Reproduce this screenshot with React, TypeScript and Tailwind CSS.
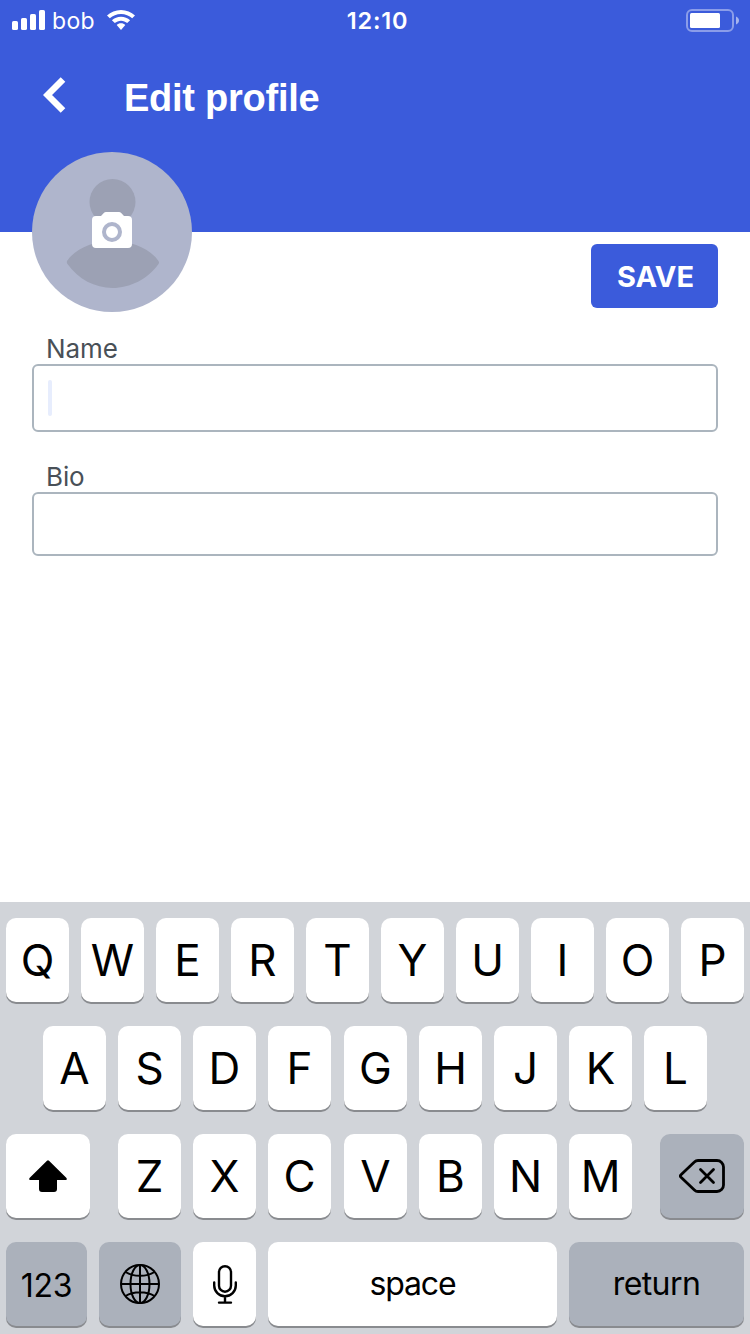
import type { ReactNode } from "react";

function StatusBar() {
  return (
    <div className="grid h-10 grid-cols-3 items-center text-white">
      <div className="flex items-center pl-3">
        <svg className="h-5 w-[34px]" viewBox="0 0 34 20" fill="currentColor">
          <rect x="0" y="11" width="6" height="9" rx="1.6" />
          <rect x="9" y="8" width="6" height="12" rx="1.6" />
          <rect x="18" y="4" width="6" height="16" rx="1.6" />
          <rect x="27" y="0" width="6" height="20" rx="1.6" />
        </svg>
        <span className="ml-[6px] w-[44px] pt-[2px] text-[23px] leading-[38px] font-normal tracking-[0.3px]">bob</span>
        <svg className="ml-[11px] h-5 w-7" viewBox="0 0 28 20" fill="currentColor">
          <path d="M14 0C8.600 0 3.700 2.100 0 5.500l2.800 2.800C5.800 5.600 9.700 4 14 4s8.200 1.600 11.200 4.300L28 5.500C24.300 2.100 19.400 0 14 0Z" />
          <path d="M14 6.700c-3.500 0-6.700 1.300-9.100 3.600l2.900 2.800C9.500 11.600 11.600 10.700 14 10.700s4.500.9 6.200 2.400l2.900-2.800C20.700 8 17.500 6.700 14 6.700Z" />
          <path d="M14 13.300c-1.700 0-3.200.6-4.300 1.700L14 20l4.300-5c-1.100-1.100-2.600-1.700-4.300-1.700Z" />
        </svg>
      </div>
      <div className="pt-[2px] pl-[5px] text-center text-[23.500px] leading-[38px] font-semibold tracking-[0.8px]">12:10</div>
      <div className="flex justify-end pr-[11px]">
        <svg className="h-[23px] w-[53px]" viewBox="0 0 53 23">
          <rect x="1" y="1" width="46" height="21" rx="5" fill="none" stroke="#8b9de9" strokeWidth="2" />
          <rect x="4" y="4" width="30" height="15" rx="1.500" fill="white" />
          <path d="M50 7.500c4 1.500 4 6.500 0 8Z" fill="#a6b4ee" />
        </svg>
      </div>
    </div>
  );
}

function Avatar() {
  return (
    <svg className="size-40" viewBox="0 0 160 160">
      <circle cx="80" cy="80" r="80" fill="#afb5cc" />
      <g fill="#9ca1b4">
        <circle cx="80.500" cy="50" r="23" />
        <path d="M35 109c8-12 26-20 45.500-20s38 8 46 20c.7 1.300.7 2 0 3C116 127 98 136 80.500 136S46 127 35.500 112c-.8-1-.8-1.800-.5-3Z" />
      </g>
      <path
        d="M74 60h13a3 3 0 0 1 2.200 1L92 64h4a4 4 0 0 1 4 4v24a4 4 0 0 1-4 4H64a4 4 0 0 1-4-4V68a4 4 0 0 1 4-4h5l2.800-3A3 3 0 0 1 74 60Z"
        fill="white"
      />
      <circle cx="80" cy="80" r="8" fill="none" stroke="#afb5cc" strokeWidth="4" />
    </svg>
  );
}

function Field({ label, focused = false }: { label: string; focused?: boolean }) {
  return (
    <label className="block">
      <span className="block h-8 pl-[14px] text-[26px] leading-[34px] tracking-[-0.1px] text-[#495057]">{label}</span>
      <span
        className={`flex items-center rounded-[6px] border-2 border-[#abb5be] px-[14px] ${focused ? "h-[68px]" : "h-16"}`}
      >
        {focused && <span className="h-9 w-1 rounded-[2px] bg-[#e7edfd]" />}
      </span>
    </label>
  );
}

function Key({ children, className = "w-[63px]", dark = false }: { children: ReactNode; className?: string; dark?: boolean }) {
  return (
    <button
      className={`flex h-[84px] shrink-0 items-center justify-center rounded-[10px] text-black shadow-[0_2px_0_#898b8f] ${dark ? "bg-[#abb1bb]" : "bg-white"} ${className}`}
    >
      {children}
    </button>
  );
}

function Letters({ value }: { value: string }) {
  return (
    <div className="flex gap-3">
      {value.split("").map((c) => (
        <Key key={c}>
          <span className="text-[44px] leading-none">{c}</span>
        </Key>
      ))}
    </div>
  );
}

function Keyboard() {
  return (
    <div className="flex h-[432px] flex-col gap-6 bg-[#d1d4d9] px-[6px] pt-4">
      <Letters value="QWERTYUIOP" />
      <div className="flex gap-[13px] pl-[37px]">
        <Letters value="ASDF" />
        <Letters value="GHJKL" />
      </div>
      <div className="flex">
        <Key className="mr-7 w-[84px]">
          <svg className="h-8 w-[38px]" viewBox="0 0 38 32">
            <path d="M18 .8a1.500 1.500 0 0 1 2 0L37 17.500c1.300 1.300 1 2.500-.5 2.500H28v9a3 3 0 0 1-3 3H13a3 3 0 0 1-3-3v-9H1.500C0 20-.3 18.800 1 17.500Z" />
          </svg>
        </Key>
        <div className="flex gap-[13px]">
          <Letters value="ZXC" />
          <Letters value="VBNM" />
        </div>
        <Key className="ml-7 w-[84px]" dark>
          <svg className="h-[34px] w-[46px]" viewBox="0 0 46 34" fill="none" stroke="black" strokeWidth="2.800" strokeLinecap="round" strokeLinejoin="round">
            <path d="M19 1.500h19a6.500 6.500 0 0 1 6.500 6.500v18a6.500 6.500 0 0 1-6.500 6.500H19c-1.600 0-2.500-.5-3.600-1.600L2 18.300c-.8-.8-.8-1.800 0-2.600L15.400 3.100C16.500 2 17.400 1.500 19 1.500Z" />
            <path d="m21.500 10.500 13 13m0-13-13 13" />
          </svg>
        </Key>
      </div>
      <div className="flex gap-3">
        <Key className="w-[81px]" dark>
          <span className="pt-[3px] text-[32px] leading-none tracking-[-0.2px]">123</span>
        </Key>
        <Key className="w-[82px]" dark>
          <svg className="size-10" viewBox="0 0 40 40" fill="none" stroke="black" strokeWidth="2">
            <circle cx="20" cy="20" r="19" />
            <ellipse cx="20" cy="20" rx="9.500" ry="19" />
            <path d="M20 1v38M1 20h38M5.500 8c8 5 21 5 29 0M5.500 32c8-5 21-5 29 0" />
          </svg>
        </Key>
        <Key>
          <svg className="h-[39px] w-6" viewBox="0 0 24 39" fill="none" stroke="black" strokeWidth="2.400" strokeLinecap="round">
            <rect x="6" y="1.200" width="12" height="25.500" rx="6" />
            <path d="M1.200 17.500v3a10.800 10.800 0 0 0 21.600 0v-3M12 31.500v6M6 37.600h12" />
          </svg>
        </Key>
        <Key className="w-[289px]">
          <span className="text-[32px] leading-none tracking-[-1.100px]">space</span>
        </Key>
        <Key className="w-[175px]" dark>
          <span className="text-[32px] leading-none tracking-[-0.600px]">return</span>
        </Key>
      </div>
    </div>
  );
}

export default function App() {
  return (
    <div className="flex h-[1334px] w-[750px] flex-col overflow-hidden bg-white font-['Inter',sans-serif]">
      <header className="h-[232px] shrink-0 bg-[#3b5bdb] text-white">
        <StatusBar />
        <div className="flex h-28 items-center pl-[43px]">
          <svg className="mb-[2px] h-9 w-[23px]" viewBox="0 0 23 36" fill="none" stroke="currentColor" strokeWidth="6.500">
            <path d="M20 2.500 4.500 18 20 33.500" />
          </svg>
          <h1 className="ml-[58px] pt-[3px] font-['Liberation_Sans',sans-serif] text-[38px] leading-none font-bold tracking-[-0.250px]">Edit profile</h1>
        </div>
      </header>
      <main className="-mt-20 flex-1 px-8">
        <div className="flex items-end justify-between">
          <Avatar />
          <button className="mb-1 h-16 w-[127px] rounded-[6px] bg-[#3b5bdb] pt-px pl-[2px] text-[29px] font-bold text-white">SAVE</button>
        </div>
        <form className="mt-5 flex flex-col gap-7">
          <Field label="Name" focused />
          <Field label="Bio" />
        </form>
      </main>
      <Keyboard />
    </div>
  );
}
